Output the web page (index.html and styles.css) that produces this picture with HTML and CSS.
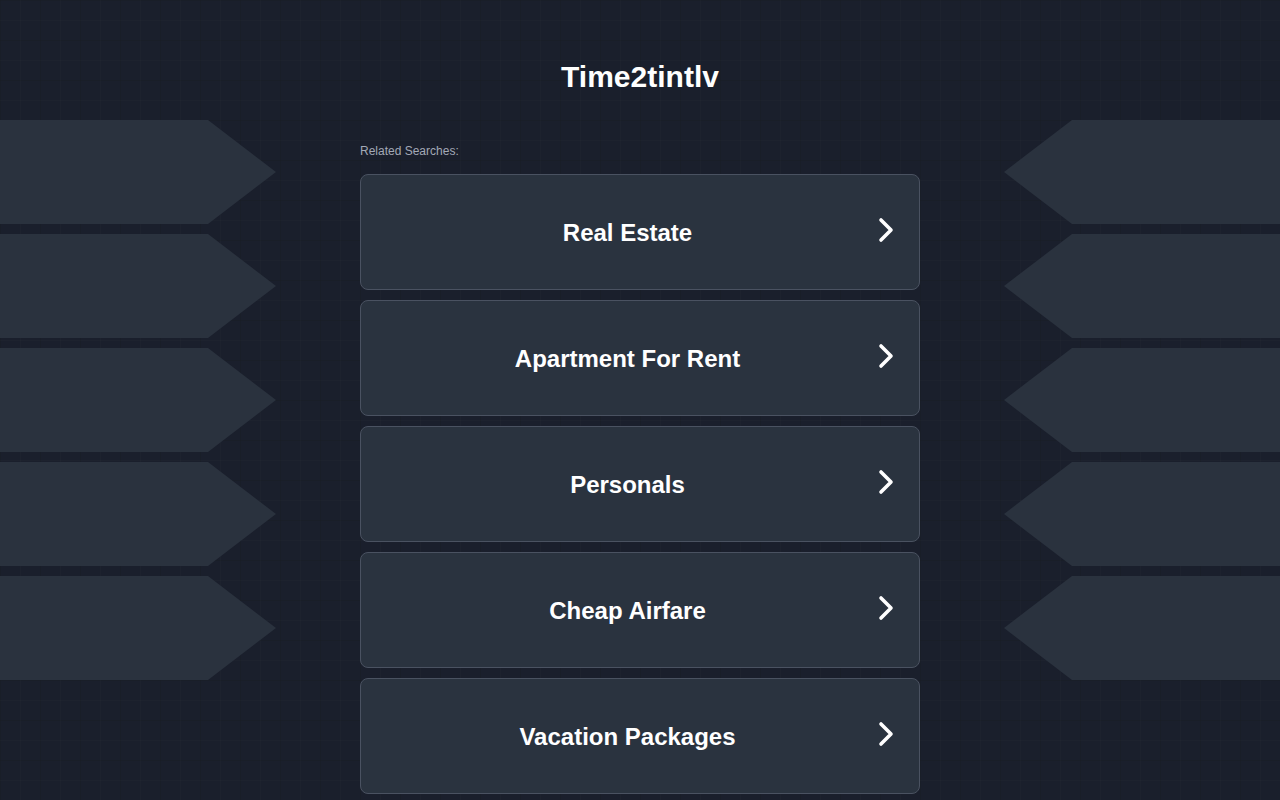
FILE: index.html
```html
<!DOCTYPE html>
<html lang="en">
<head>
<meta charset="utf-8">
<title>Time2tintlv</title>
<link rel="stylesheet" href="styles.css">
</head>
<body>
<div class="page">
  <div class="side side-left">
    <div class="shape"></div>
    <div class="shape"></div>
    <div class="shape"></div>
    <div class="shape"></div>
    <div class="shape"></div>
  </div>
  <main class="center">
    <h1 class="title">Time2tintlv</h1>
    <div class="related">Related Searches:</div>
    <ul class="links">
      <li class="link"><span class="label">Real Estate</span><svg class="chev" viewBox="0 0 16 26"><path d="M3 3 L13 13 L3 23" /></svg></li>
      <li class="link"><span class="label">Apartment For Rent</span><svg class="chev" viewBox="0 0 16 26"><path d="M3 3 L13 13 L3 23" /></svg></li>
      <li class="link"><span class="label">Personals</span><svg class="chev" viewBox="0 0 16 26"><path d="M3 3 L13 13 L3 23" /></svg></li>
      <li class="link"><span class="label">Cheap Airfare</span><svg class="chev" viewBox="0 0 16 26"><path d="M3 3 L13 13 L3 23" /></svg></li>
      <li class="link"><span class="label">Vacation Packages</span><svg class="chev" viewBox="0 0 16 26"><path d="M3 3 L13 13 L3 23" /></svg></li>
    </ul>
  </main>
  <div class="side side-right">
    <div class="shape"></div>
    <div class="shape"></div>
    <div class="shape"></div>
    <div class="shape"></div>
    <div class="shape"></div>
  </div>
</div>
</body>
</html>
```

FILE: styles.css
```css
html, body {
  margin: 0;
  padding: 0;
  height: 100%;
}
body {
  background-color: #1a1f2c;
  background-image:
    linear-gradient(to right, rgba(0,0,0,0.12) 1px, transparent 1px),
    linear-gradient(to bottom, rgba(0,0,0,0.12) 1px, transparent 1px),
    linear-gradient(to right, rgba(255,255,255,0.012) 1px, transparent 1px),
    linear-gradient(to bottom, rgba(255,255,255,0.012) 1px, transparent 1px);
  background-size: 40px 40px, 40px 40px, 20px 20px, 20px 20px;
  font-family: "Liberation Sans", Arial, sans-serif;
  color: #ffffff;
  overflow: hidden;
}
.page {
  display: grid;
  grid-template-columns: 276px 1fr 276px;
  width: 1280px;
}
.side {
  padding-top: 120px;
  display: flex;
  flex-direction: column;
  gap: 10px;
}
.shape {
  height: 104px;
  width: 276px;
  background: #2a323e;
}
.side-left .shape {
  clip-path: polygon(0 0, 208px 0, 276px 52px, 208px 104px, 0 104px);
}
.side-right .shape {
  clip-path: polygon(68px 0, 276px 0, 276px 104px, 68px 104px, 0 52px);
}
.center {
  width: 560px;
  justify-self: center;
  display: flex;
  flex-direction: column;
}
.title {
  margin: 0;
  padding-top: 60px;
  height: 34px;
  line-height: 34px;
  font-size: 30px;
  font-weight: bold;
  text-align: center;
  color: #ffffff;
}
.related {
  margin-top: 50px;
  font-size: 12px;
  line-height: 14px;
  color: #a3a9b7;
}
.links {
  list-style: none;
  margin: 16px 0 0;
  padding: 0;
  display: flex;
  flex-direction: column;
  gap: 10px;
}
.link {
  box-sizing: border-box;
  height: 116px;
  border: 1px solid #4a5261;
  border-radius: 8px;
  background: #2a333f;
  display: flex;
  align-items: center;
  padding-right: 25px;
}
.label {
  flex: 1;
  text-align: center;
  padding-left: 16px;
  padding-top: 2px;
  font-size: 24px;
  font-weight: bold;
  color: #ffffff;
}
.chev {
  width: 16px;
  height: 26px;
  margin-top: -4px;
  fill: none;
  stroke: #ffffff;
  stroke-width: 3.6;
  stroke-linecap: round;
  stroke-linejoin: round;
}
```
